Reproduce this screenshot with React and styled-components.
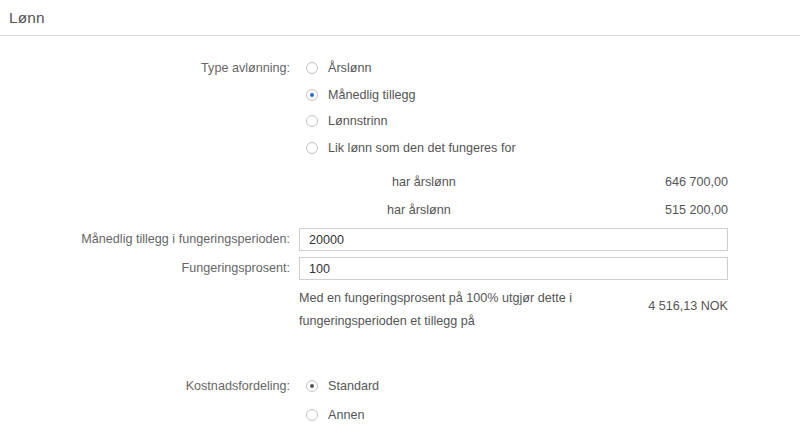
import React from "react";
import styled, { createGlobalStyle } from "styled-components";

const Global = createGlobalStyle`
  html, body { margin: 0; padding: 0; background: #fff; }
  body { font-family: "Liberation Sans", Arial, sans-serif; }
`;

const Page = styled.div`
  width: 800px;
  height: 443px;
  overflow: hidden;
  background: #fff;
`;

const Header = styled.div`
  height: 35px;
  border-bottom: 1px solid #d9d9d9;
  padding-left: 9px;
  display: flex;
  align-items: center;
  font-size: 15.4px;
  color: #555;
  letter-spacing: 0.2px;
`;

const Form = styled.div`
  padding-top: 18.7px;
  font-size: 12.6px;
  color: #555;
`;

const Row = styled.div`
  display: flex;
  align-items: flex-start;
  margin-top: ${(p) => p.$mt || 0}px;
`;

const Label = styled.div`
  width: 290px;
  flex: none;
  text-align: right;
  color: #666;
  line-height: ${(p) => p.$lh || 23}px;
`;

const Content = styled.div`
  margin-left: 9px;
  width: 429px;
  flex: none;
`;

const RadioList = styled.div`
  display: flex;
  flex-direction: column;
  padding-left: 7px;
`;

const RadioRow = styled.label`
  display: flex;
  align-items: center;
  gap: 10px;
  height: ${(p) => p.$h}px;
  color: #555;
`;

const RadioCircle = styled.span`
  width: 10px;
  height: 10px;
  border-radius: 50%;
  border: 1px solid #c4c4c4;
  background: #fff;
  display: flex;
  align-items: center;
  justify-content: center;
  flex: none;
  &::after {
    content: "";
    display: ${(p) => (p.$dot ? "block" : "none")};
    width: 4px;
    height: 4px;
    border-radius: 50%;
    background: ${(p) => p.$dot};
  }
`;

const InfoRow = styled.div`
  display: flex;
  justify-content: space-between;
  align-items: center;
  height: 28px;
  padding-left: ${(p) => p.$indent}px;
`;

const Value = styled.span`
  color: #555;
`;

const Input = styled.div`
  box-sizing: border-box;
  height: 23px;
  border: 1px solid #cfcfcf;
  padding-left: 9px;
  display: flex;
  align-items: center;
  color: #333;
`;

const Summary = styled.div`
  display: flex;
  justify-content: space-between;
  align-items: flex-start;
  line-height: 23px;
`;

const SummaryText = styled.div`
  width: 300px;
`;

const Amount = styled.div`
  padding-top: 8px;
  color: #555;
`;

function Radio({ label, dot, h }) {
  return (
    <RadioRow $h={h}>
      <RadioCircle $dot={dot} />
      <span>{label}</span>
    </RadioRow>
  );
}

export default function App() {
  return (
    <Page>
      <Global />
      <Header>Lønn</Header>
      <Form>
        <Row>
          <Label $lh={26.67}>Type avlønning:</Label>
          <Content>
            <RadioList>
              <Radio h={26.67} label="Årslønn" />
              <Radio h={26.67} label="Månedlig tillegg" dot="#2a6bc2" />
              <Radio h={26.67} label="Lønnstrinn" />
              <Radio h={26.67} label="Lik lønn som den det fungeres for" />
            </RadioList>
          </Content>
        </Row>
        <Row $mt={6.7}>
          <Label />
          <Content>
            <InfoRow $indent={93}>
              <span>har årslønn</span>
              <Value>646 700,00</Value>
            </InfoRow>
            <InfoRow $indent={88}>
              <span>har årslønn</span>
              <Value>515 200,00</Value>
            </InfoRow>
          </Content>
        </Row>
        <Row $mt={4}>
          <Label>Månedlig tillegg i fungeringsperioden:</Label>
          <Content>
            <Input>20000</Input>
          </Content>
        </Row>
        <Row $mt={6}>
          <Label>Fungeringsprosent:</Label>
          <Content>
            <Input>100</Input>
          </Content>
        </Row>
        <Row $mt={6.5}>
          <Label />
          <Content>
            <Summary>
              <SummaryText>
                Med en fungeringsprosent på 100% utgjør dette i fungeringsperioden et tillegg på
              </SummaryText>
              <Amount>4 516,13 NOK</Amount>
            </Summary>
          </Content>
        </Row>
        <Row $mt={39}>
          <Label $lh={29}>Kostnadsfordeling:</Label>
          <Content>
            <RadioList>
              <Radio h={29} label="Standard" dot="#555" />
              <Radio h={29} label="Annen" />
            </RadioList>
          </Content>
        </Row>
      </Form>
    </Page>
  );
}
